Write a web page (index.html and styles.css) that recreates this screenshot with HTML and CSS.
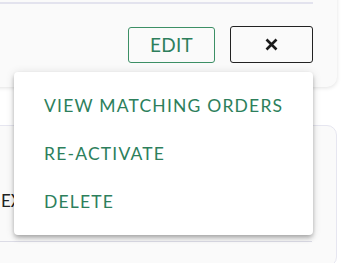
FILE: index.html
```html
<!DOCTYPE html>
<html>
<head>
<meta charset="utf-8">
<link rel="stylesheet" href="styles.css">
</head>
<body>
<div class="page">
  <div class="card card-top">
    <div class="divider"></div>
    <div class="actions">
      <button class="btn btn-edit">EDIT</button>
      <button class="btn btn-close" aria-label="Close">
        <svg width="13" height="13" viewBox="0 0 13 13"><path d="M1.5 1.5 L11.5 11.5 M11.5 1.5 L1.5 11.5" stroke="#1b1b1b" stroke-width="2.6" stroke-linecap="butt" fill="none"/></svg>
      </button>
    </div>
  </div>
  <div class="card card-bottom">
    <div class="row">EXPIRED</div>
  </div>
  <div class="menu">
    <div class="menu-item">VIEW MATCHING ORDERS</div>
    <div class="menu-item">RE-ACTIVATE</div>
    <div class="menu-item">DELETE</div>
  </div>
</div>
</body>
</html>
```

FILE: styles.css
```css
html, body {
  margin: 0;
  padding: 0;
  background: #ffffff;
  font-family: Lato, "Noto Sans", sans-serif;
  overflow: hidden;
}
.page {
  position: relative;
  display: flow-root;
  width: 352px;
  height: 263px;
  padding-right: 15px;
  box-sizing: border-box;
}
.card {
  background: #fafafa;
  border-radius: 10px;
  margin-left: -30px;
}
.card-top {
  margin-top: -40px;
  padding-top: 42px;
  padding-right: 24px;
  padding-bottom: 24px;
  box-shadow: 0 1px 4px rgba(0, 0, 0, 0.12);
}
.divider {
  height: 2px;
  background: #e3e3ee;
}
.actions {
  display: flex;
  justify-content: flex-end;
  align-items: center;
  gap: 15px;
  margin-top: 22px;
}
.btn {
  font-family: Lato, "Noto Sans", sans-serif;
  background: transparent;
  box-sizing: border-box;
  border-radius: 3px;
  padding: 0;
  display: flex;
  align-items: center;
  justify-content: center;
}
.btn-edit {
  width: 87px;
  height: 36px;
  border: 1px solid #3c8f65;
  color: #2d7f5c;
  font-size: 19px;
  letter-spacing: 0.2px;
}
.btn-close {
  width: 83px;
  height: 37px;
  border: 1px solid #222;
}
.card-bottom {
  margin-top: 38px;
  border: 1px solid #e6e6f0;
  padding-right: 24px;
  height: 140px;
}
.row {
  margin-top: 64px;
  padding-left: 30px;
  height: 51px;
  border-bottom: 1px solid #dcdce6;
  color: #222;
  font-size: 17px;
  line-height: 22px;
}
.menu {
  position: absolute;
  left: 14px;
  top: 72px;
  width: 299px;
  height: 163px;
  box-sizing: border-box;
  padding-top: 9px;
  background: #fff;
  border-radius: 4px;
  box-shadow: 0 2px 4px -1px rgba(0,0,0,0.2), 0 4px 5px 0 rgba(0,0,0,0.14), 0 1px 10px 0 rgba(0,0,0,0.12);
}
.menu-item {
  height: 48px;
  display: flex;
  align-items: center;
  padding-left: 30px;
  color: #2d7f5c;
  font-size: 17.5px;
  letter-spacing: 1.2px;
}
```
